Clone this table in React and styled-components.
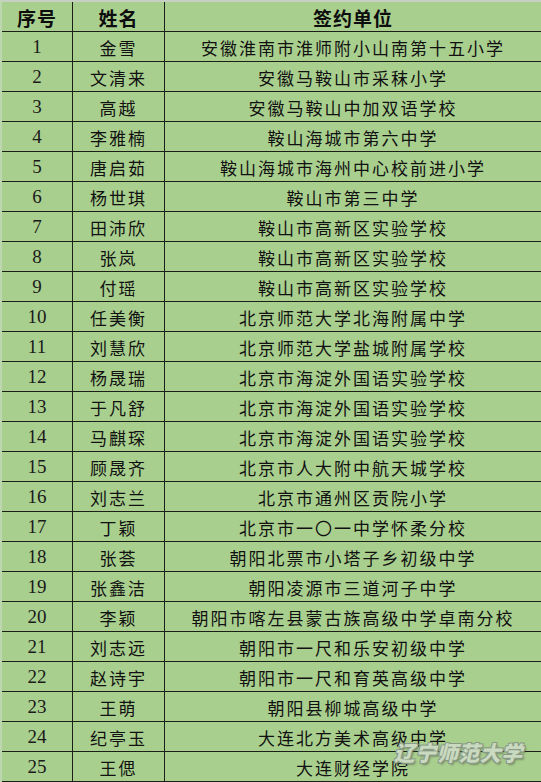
import React from "react";
import styled, { createGlobalStyle } from "styled-components";

const rows = [
  ["1", "金雪", "安徽淮南市淮师附小山南第十五小学"],
  ["2", "文清来", "安徽马鞍山市采秣小学"],
  ["3", "高越", "安徽马鞍山中加双语学校"],
  ["4", "李雅楠", "鞍山海城市第六中学"],
  ["5", "唐启茹", "鞍山海城市海州中心校前进小学"],
  ["6", "杨世琪", "鞍山市第三中学"],
  ["7", "田沛欣", "鞍山市高新区实验学校"],
  ["8", "张岚", "鞍山市高新区实验学校"],
  ["9", "付瑶", "鞍山市高新区实验学校"],
  ["10", "任美衡", "北京师范大学北海附属中学"],
  ["11", "刘慧欣", "北京师范大学盐城附属学校"],
  ["12", "杨晟瑞", "北京市海淀外国语实验学校"],
  ["13", "于凡舒", "北京市海淀外国语实验学校"],
  ["14", "马麒琛", "北京市海淀外国语实验学校"],
  ["15", "顾晟齐", "北京市人大附中航天城学校"],
  ["16", "刘志兰", "北京市通州区贡院小学"],
  ["17", "丁颖", "北京市一〇一中学怀柔分校"],
  ["18", "张荟", "朝阳北票市小塔子乡初级中学"],
  ["19", "张鑫洁", "朝阳凌源市三道河子中学"],
  ["20", "李颖", "朝阳市喀左县蒙古族高级中学卓南分校"],
  ["21", "刘志远", "朝阳市一尺和乐安初级中学"],
  ["22", "赵诗宇", "朝阳市一尺和育英高级中学"],
  ["23", "王萌", "朝阳县柳城高级中学"],
  ["24", "纪亭玉", "大连北方美术高级中学"],
  ["25", "王偲", "大连财经学院"],
];

const GlobalStyle = createGlobalStyle`
  html, body {
    margin: 0;
    padding: 0;
    background: #a9cf8e;
  }
`;

const Sheet = styled.div`
  position: relative;
  width: 541px;
  height: 782px;
  overflow: hidden;
  box-sizing: border-box;
  background: #a9cf8e;
  border-top: 2px solid #c6d0c2;
  border-left: 2px solid #bcd6ae;
`;

const Row = styled.div`
  display: grid;
  grid-template-columns: 71px 92px 1fr;
  height: 30px;
  box-sizing: border-box;
  border-bottom: 1px solid #1c1f18;
`;

const Cell = styled.div`
  display: flex;
  align-items: center;
  justify-content: center;
  box-sizing: border-box;
  border-right: ${({ $last }) => ($last ? "none" : "1px solid #1c1f18")};
  color: #111;
  white-space: nowrap;
  font-family: "Noto Sans CJK SC", sans-serif;
  font-size: 17px;
  letter-spacing: 2px;
  padding-top: 1px;
`;

const HeadCell = styled(Cell)`
  font-weight: bold;
  font-size: 19px;
  letter-spacing: 1px;
  color: #0d0d0d;
`;

const NumCell = styled(Cell)`
  font-family: "Liberation Serif", serif;
  font-size: 19px;
  letter-spacing: 0;
  color: #1a1a1a;
`;

const Marker = styled.div`
  position: absolute;
  left: -2px;
  top: 396px;
  width: 2px;
  height: 14px;
  background: #e2b64a;
`;

const Watermark = styled.div`
  position: absolute;
  left: 394px;
  top: 738px;
  width: 130px;
  font-family: "Noto Sans CJK SC", sans-serif;
  font-weight: 900;
  font-size: 21px;
  line-height: 24px;
  letter-spacing: 0.5px;
  white-space: nowrap;
  color: rgba(214, 230, 204, 0.85);
  transform: skewX(-14deg);
  text-shadow:
    1px 1px 0 #8a9a86,
    -1px -1px 0 #8a9a86,
    1px -1px 0 #8a9a86,
    -1px 1px 0 #8a9a86,
    2px 2px 2px rgba(60, 70, 60, 0.5);
`;

export default function App() {
  return (
    <>
      <GlobalStyle />
      <Sheet>
        <Row>
          <HeadCell>序号</HeadCell>
          <HeadCell>姓名</HeadCell>
          <HeadCell $last>签约单位</HeadCell>
        </Row>
        {rows.map(([n, name, unit]) => (
          <Row key={n}>
            <NumCell>{n}</NumCell>
            <Cell>{name}</Cell>
            <Cell $last>{unit}</Cell>
          </Row>
        ))}
        <Marker />
        <Watermark>辽宁师范大学</Watermark>
      </Sheet>
    </>
  );
}
